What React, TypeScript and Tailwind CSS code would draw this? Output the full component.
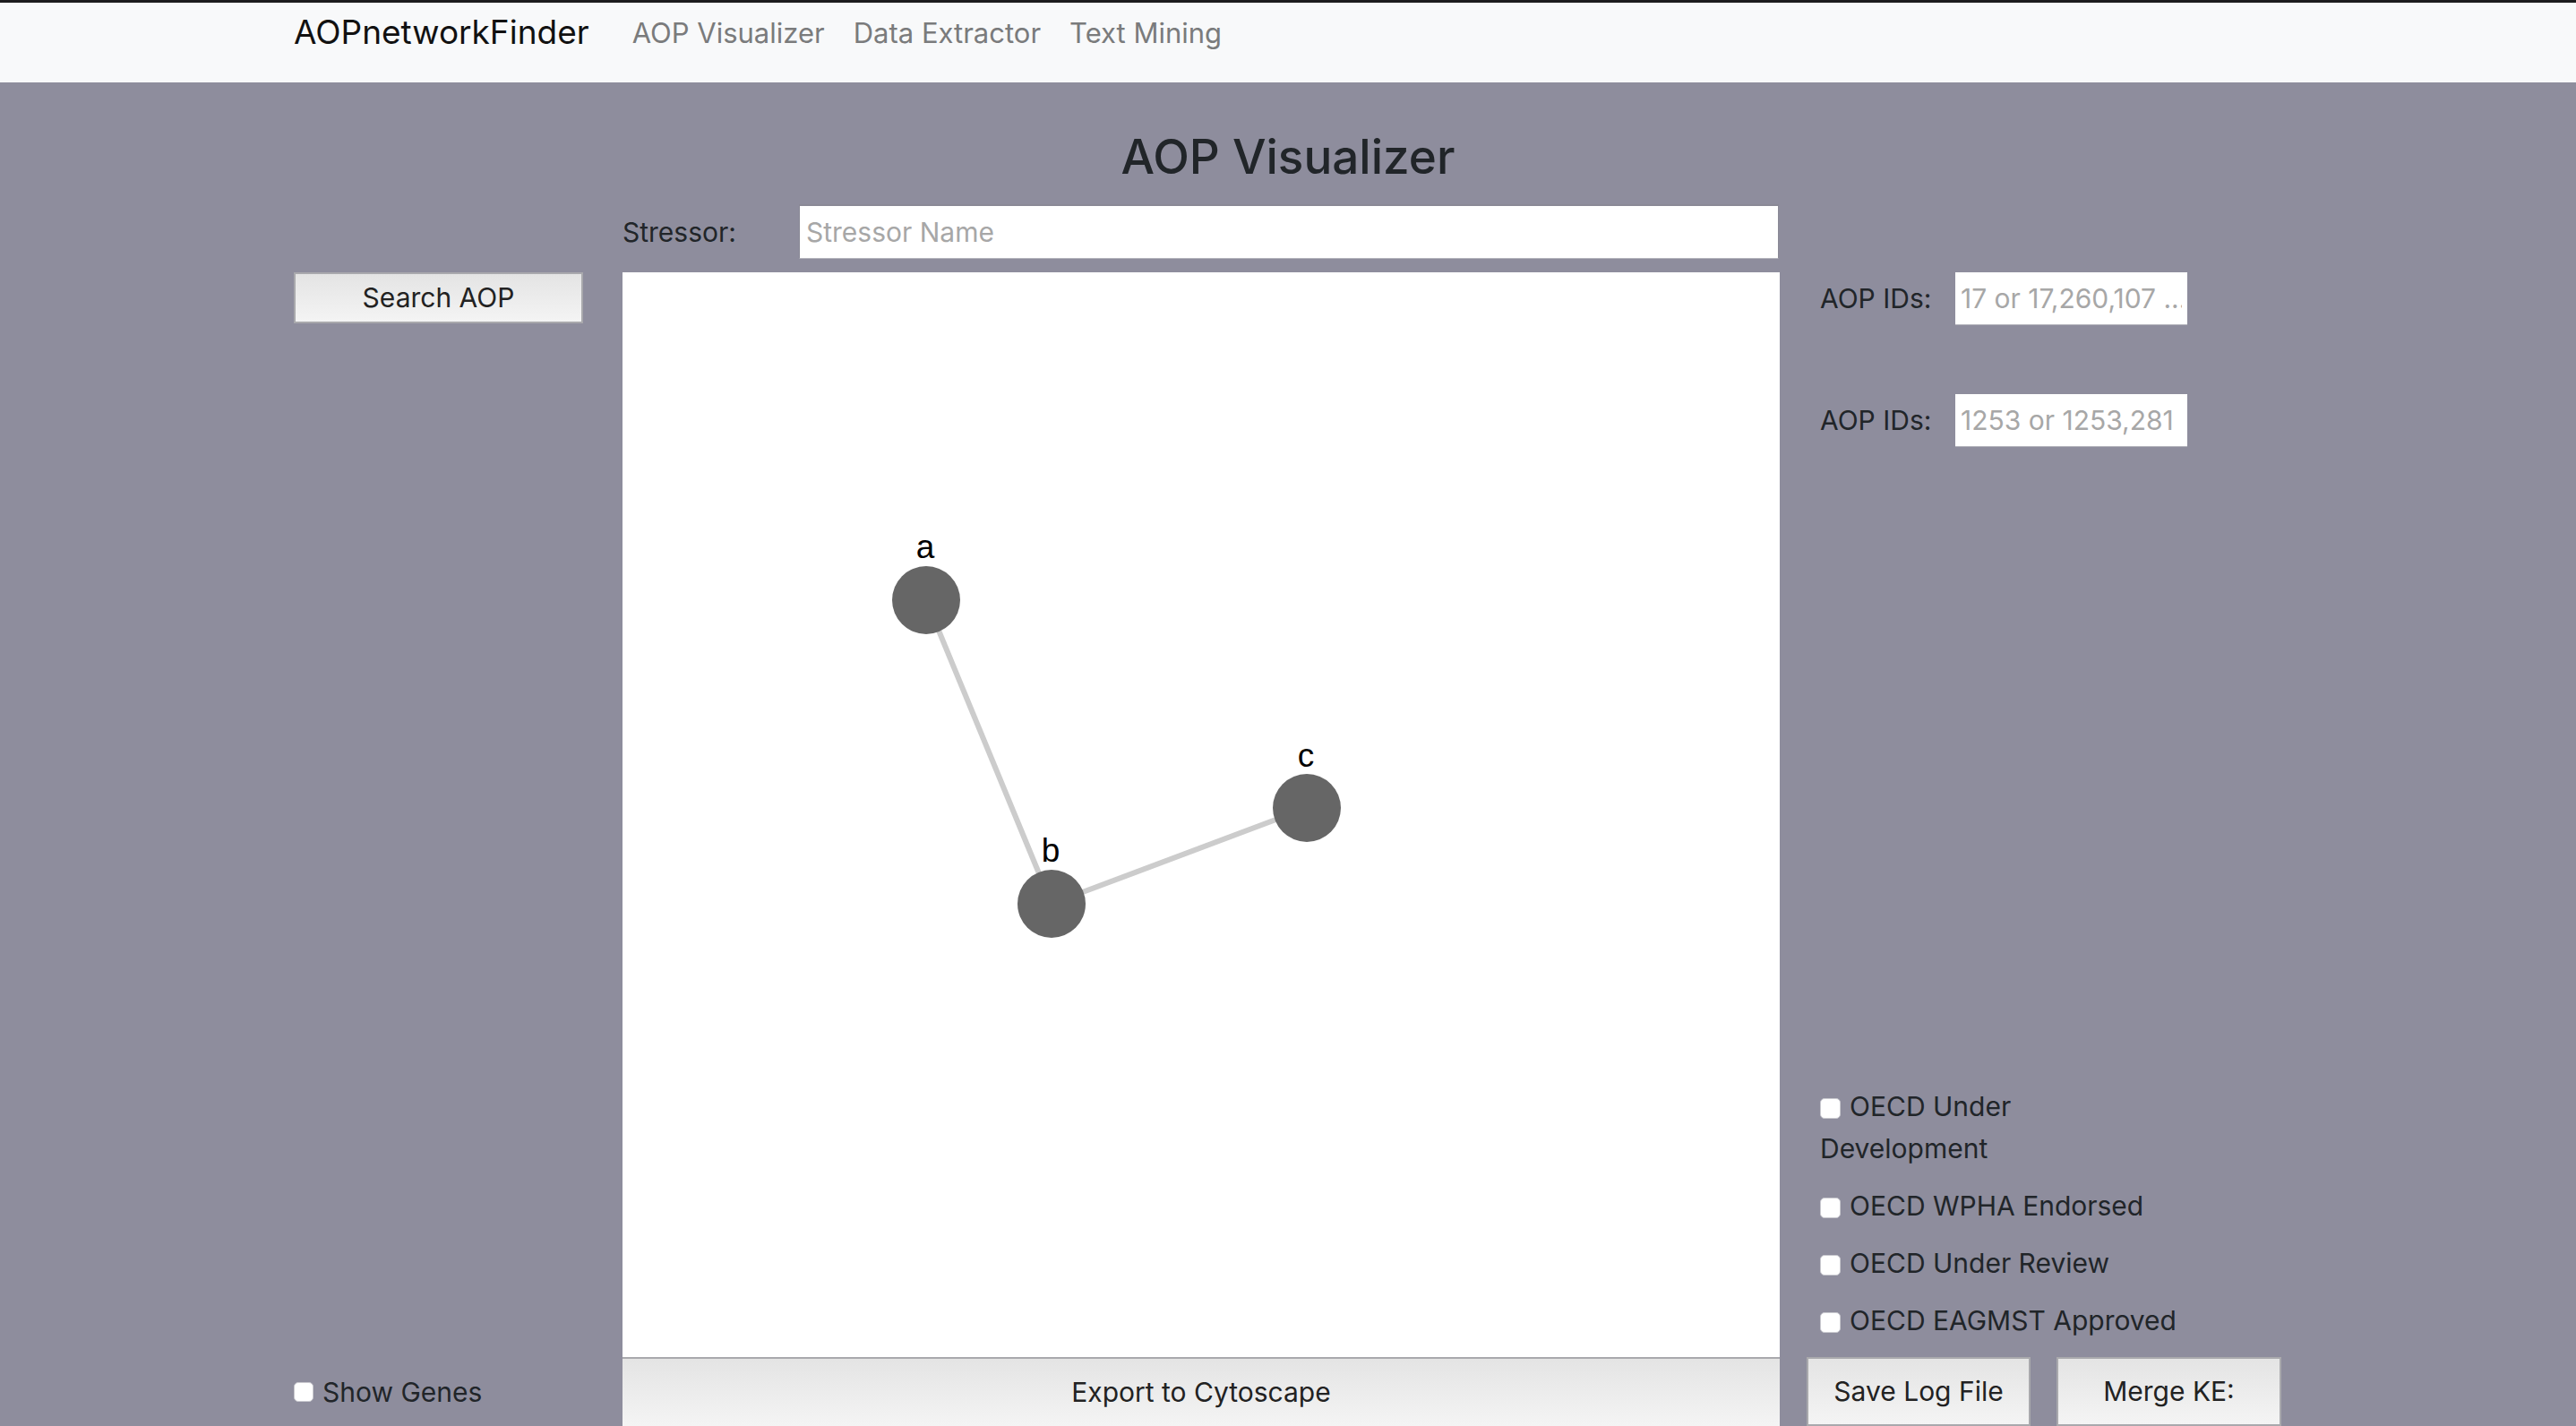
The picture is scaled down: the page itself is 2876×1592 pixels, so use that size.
import React from 'react'

const nodes = [
  { id: 'a', x: 339, y: 366, ly: 319 },
  { id: 'b', x: 479, y: 705, ly: 658 },
  { id: 'c', x: 764, y: 598, ly: 552 },
]

const edges = [
  ['a', 'b'],
  ['b', 'c'],
]

function Graph() {
  const byId = Object.fromEntries(nodes.map((n) => [n.id, n]))
  return (
    <svg className="absolute inset-0" width="1292" height="1211" viewBox="0 0 1292 1211">
      {edges.map(([s, t]) => (
        <line
          key={s + t}
          x1={byId[s].x}
          y1={byId[s].y}
          x2={byId[t].x}
          y2={byId[t].y}
          stroke="#cccccc"
          strokeWidth="6"
        />
      ))}
      {nodes.map((n) => (
        <g key={n.id}>
          <circle cx={n.x} cy={n.y} r="38" fill="#666666" />
          <text
            x={n.x - 1}
            y={n.ly}
            textAnchor="middle"
            fontSize="37"
            fill="#000"
            fontFamily="'Liberation Sans', Arial, sans-serif"
          >
            {n.id}
          </text>
        </g>
      ))}
    </svg>
  )
}

function Check({ label, br }: { label: string; br?: string }) {
  return (
    <div className="mb-[17px] leading-[47px]">
      <input
        type="checkbox"
        className="mr-[10px] inline-block h-[23px] w-[23px] appearance-none rounded-[5px] border border-[#c9c9cf] bg-white align-[-3px]"
      />
      {label}
      {br && (
        <>
          <br />
          {br}
        </>
      )}
    </div>
  )
}

const btn =
  'border-2 border-[#a9a9ad] bg-gradient-to-b from-[#e4e4e4] to-[#f4f4f4] text-[30px] text-[#222]'

const idInput =
  'h-[59px] w-[259px] border-b border-[#b4b4bc] bg-white px-[6px] text-[30px] outline-none placeholder:text-[#a7a7a7]'

export default function App() {
  return (
    <div className="h-[1592px] w-full overflow-hidden bg-[#8e8d9d] font-[Inter,'Liberation_Sans',sans-serif] text-[#212529]">
      <div className="h-[3px] bg-[#1c1c1e]" />

      {/* Navbar */}
      <nav className="h-[89px] bg-[#f8f9fa]">
        <div className="mx-auto flex w-[2220px] items-start pt-[9px]">
          <span className="mr-[32px] text-[37px] leading-[48px] text-[#111]">AOPnetworkFinder</span>
          {['AOP Visualizer', 'Data Extractor', 'Text Mining'].map((l) => (
            <span key={l} className="px-[16px] pt-[3px] text-[31px] leading-[44px] text-[#7a7b7c]">
              {l}
            </span>
          ))}
        </div>
      </nav>

      <h2 className="mt-[48px] text-center text-[53px] font-medium leading-[70px]">AOP Visualizer</h2>

      <div className="mx-auto w-[2220px]">
        {/* Stressor row */}
        <div className="mt-[18px] flex h-[61px] items-center pl-[367px]">
          <span className="w-[197px] pt-[2px] text-[30px]">Stressor:</span>
          <input
            className="h-[61px] w-[1094px] border border-t-2 border-[#8a8996] border-b-[#b4b4bc] bg-white px-[7px] text-[30px] outline-none placeholder:text-[#a7a7a7]"
            placeholder="Stressor Name"
          />
        </div>

        {/* Main row */}
        <div className="mt-[15px] flex h-[1288px]">
          {/* Left column */}
          <div className="flex w-[323px] flex-col">
            <button className={`${btn} h-[57px] w-[323px]`}>Search AOP</button>
            <label className="mt-auto mb-[14px] flex items-center text-[30px] leading-[48px]">
              <input
                type="checkbox"
                className="mr-[10px] h-[22px] w-[22px] appearance-none rounded-[5px] border border-[#c9c9cf] bg-white"
              />
              Show Genes
            </label>
          </div>

          {/* Middle column */}
          <div className="ml-[44px] flex w-[1292px] flex-col">
            <div className="relative h-[1211px] bg-white">
              <Graph />
            </div>
            <button className={`${btn} h-[77px] w-full border-x-0 border-b-0`}>Export to Cytoscape</button>
          </div>

          {/* Right column */}
          <div className="ml-[30px] flex w-[530px] flex-col">
            <div className="pl-[15px]">
              <div className="flex h-[59px] items-center">
                <span className="w-[151px] text-[30px]">AOP IDs:</span>
                <input className={idInput} placeholder="17 or 17,260,107 ..." />
              </div>
              <div className="mt-[77px] flex h-[59px] items-center">
                <span className="w-[151px] text-[30px]">AOP IDs:</span>
                <input className={idInput} placeholder="1253 or 1253,281 ..." />
              </div>
            </div>

            <div className="mt-auto pl-[15px] text-[30px]">
              <Check label="OECD Under" br="Development" />
              <Check label="OECD WPHA Endorsed" />
              <Check label="OECD Under Review" />
              <Check label="OECD EAGMST Approved" />
            </div>

            <div className="flex gap-[29px]">
              <button className={`${btn} h-[77px] w-[250px]`}>Save Log File</button>
              <button className={`${btn} h-[77px] w-[251px]`}>Merge KE:</button>
            </div>
          </div>
        </div>
      </div>
    </div>
  )
}
